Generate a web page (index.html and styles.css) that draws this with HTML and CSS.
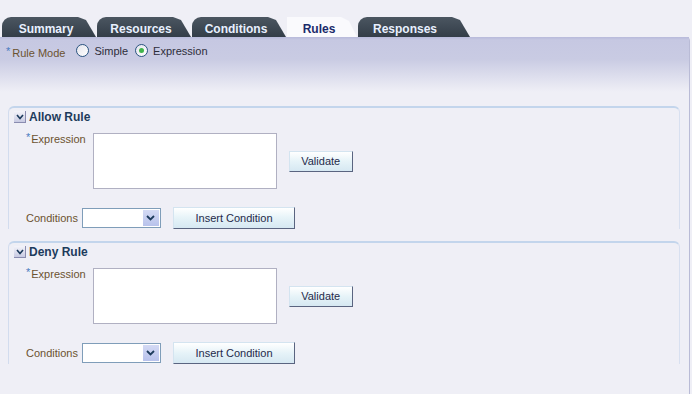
FILE: index.html
```html
<!DOCTYPE html>
<html lang="en">
<head>
    <meta charset="UTF-8">
    <title>Rules</title>
    <link rel="stylesheet" href="styles.css">
</head>
<body>
    <div class="tabs">
        <div class="tab">Summary</div>
        <div class="tab">Resources</div>
        <div class="tab">Conditions</div>
        <div class="tab active">Rules</div>
        <div class="tab wide">Responses</div>
    </div>

    <div class="page">
        <div class="mode-band">
            <span class="label"><span class="req">*</span>Rule Mode</span>
            <span class="radio"></span><span class="opt">Simple</span>
            <span class="radio on"></span><span class="opt">Expression</span>
        </div>

        <div class="rule">
            <div class="rule-head">
                <span class="toggle">
                    <svg width="8" height="6" viewBox="0 0 8 6"><path d="M1 1 L4 4.5 L7 1" fill="none" stroke="#1d3b5c" stroke-width="1.6"/></svg>
                </span>
                <span class="rule-title">Allow Rule</span>
            </div>
            <div class="expr-row">
                <span class="label top"><span class="req">*</span>Expression</span>
                <div class="textarea"></div>
                <button class="btn">Validate</button>
            </div>
            <div class="cond-row">
                <span class="label">Conditions</span>
                <div class="select"><span class="drop"><svg width="9" height="6" viewBox="0 0 9 6"><path d="M1 1 L4.5 4.5 L8 1" fill="none" stroke="#1d3b5c" stroke-width="1.8"/></svg></span></div>
                <button class="btn wide-btn">Insert Condition</button>
            </div>
        </div>

        <div class="rule">
            <div class="rule-head">
                <span class="toggle">
                    <svg width="8" height="6" viewBox="0 0 8 6"><path d="M1 1 L4 4.5 L7 1" fill="none" stroke="#1d3b5c" stroke-width="1.6"/></svg>
                </span>
                <span class="rule-title">Deny Rule</span>
            </div>
            <div class="expr-row">
                <span class="label top"><span class="req">*</span>Expression</span>
                <div class="textarea"></div>
                <button class="btn">Validate</button>
            </div>
            <div class="cond-row">
                <span class="label">Conditions</span>
                <div class="select"><span class="drop"><svg width="9" height="6" viewBox="0 0 9 6"><path d="M1 1 L4.5 4.5 L8 1" fill="none" stroke="#1d3b5c" stroke-width="1.8"/></svg></span></div>
                <button class="btn wide-btn">Insert Condition</button>
            </div>
        </div>
    </div>
</body>
</html>
```

FILE: styles.css
```css
body {
    margin: 0;
    background: #efeff6;
    font-family: "Liberation Sans", Arial, sans-serif;
    font-size: 11px;
    color: #333;
    height: 394px;
    overflow: hidden;
}
.tabs {
    display: flex;
    padding: 17px 0 0 2px;
    height: 20px;
}
.tab {
    width: 94px;
    height: 20px;
    line-height: 25px;
    padding-right: 6px;
    box-sizing: border-box;
    text-align: center;
    font-size: 12px;
    font-weight: bold;
    color: #e8f0ff;
    background: linear-gradient(#4b5661, #333d48);
    border-top-left-radius: 9px;
    clip-path: polygon(0 0, calc(100% - 18px) 0, calc(100% - 10px) 3px, 100% 100%, 0 100%);
    margin-right: 1px;
}
.tab.active {
    width: 70px;
    background: #fafafd;
    color: #1a2a6a;
    clip-path: polygon(0 0, calc(100% - 16px) 0, calc(100% - 8px) 4px, 100% 100%, 0 100%);
    border-top-left-radius: 0;
}
.tab.wide {
    width: 112px;
    padding-right: 18px;
}
.page {
    width: 689px;
    height: 357px;
    border-right: 1px solid #b9bbd6;
    border-top-right-radius: 4px;
}
.mode-band {
    height: 55px;
    padding: 8px 0 0 6px;
    box-sizing: border-box;
    display: flex;
    align-items: flex-start;
    background: linear-gradient(#b8badb 0, #c6c8e2 3px, #c9cbe3 40%, #efeff6 100%);
}
.label {
    color: #6b5230;
}
.req {
    color: #4a7bc0;
    margin-right: 2px;
    vertical-align: 2px;
}
.mode-band .label {
    margin-right: 11px;
}
.radio {
    width: 11px;
    height: 11px;
    border: 1px solid #2a5480;
    border-radius: 50%;
    background: linear-gradient(135deg, #e4e4ec, #fff);
    margin: -1px 5px 0 0;
    position: relative;
}
.radio.on::after {
    content: "";
    position: absolute;
    left: 3px;
    top: 3px;
    width: 5px;
    height: 5px;
    border-radius: 50%;
    background: #3fb44a;
}
.opt {
    color: #2d2d3a;
    margin-right: 7px;
}
.rule {
    margin: 14px 9px 0 8px;
    border-top: 2px solid #c3d5ec;
    border-left: 1px solid #d2dcee;
    border-right: 1px solid #d8e0f0;
    border-radius: 6px 6px 0 0;
}
.rule + .rule {
    margin-top: 12px;
}
.rule-head {
    display: flex;
    align-items: center;
    height: 18px;
    padding-left: 5px;
}
.toggle {
    width: 12px;
    height: 12px;
    box-sizing: border-box;
    border-right: 1px solid #8a8cb0;
    border-bottom: 1px solid #8a8cb0;
    background: linear-gradient(#f4f4fa, #c8cae2);
    display: flex;
    align-items: center;
    justify-content: center;
    margin-right: 3px;
}
.rule-title {
    font-size: 12px;
    font-weight: bold;
    color: #1d3b5c;
}
.expr-row {
    display: flex;
    align-items: center;
    padding: 7px 0 0 17px;
}
.expr-row .label {
    align-self: flex-start;
    margin: -2px 7px 0 0;
}
.expr-row .label .req {
    margin-right: 1px;
}
.textarea {
    width: 182px;
    height: 54px;
    background: #fff;
    border: 1px solid #b0b0c2;
}
.btn {
    margin-left: 12px;
    width: 64px;
    height: 21px;
    padding: 0 0 1px;
    font-family: "Liberation Sans", Arial, sans-serif;
    font-size: 11px;
    color: #1f2a4a;
    background: linear-gradient(#ffffff, #e6f3f8 50%, #d6e8f2);
    border: 1px solid;
    border-color: #d4e4f0 #5a6480 #5a6480 #d4e4f0;
}
.cond-row {
    display: flex;
    align-items: center;
    padding: 18px 0 0 17px;
}
.cond-row .label {
    margin-right: 4px;
}
.select {
    width: 79px;
    height: 20px;
    box-sizing: border-box;
    background: #fff;
    border: 1px solid #7f9db9;
    display: flex;
    justify-content: flex-end;
}
.drop {
    width: 16px;
    margin: 1px;
    background: linear-gradient(#d4daf4, #b8c2ec);
    display: flex;
    align-items: center;
    justify-content: center;
}
.btn.wide-btn {
    width: 122px;
    height: 22px;
}
```
